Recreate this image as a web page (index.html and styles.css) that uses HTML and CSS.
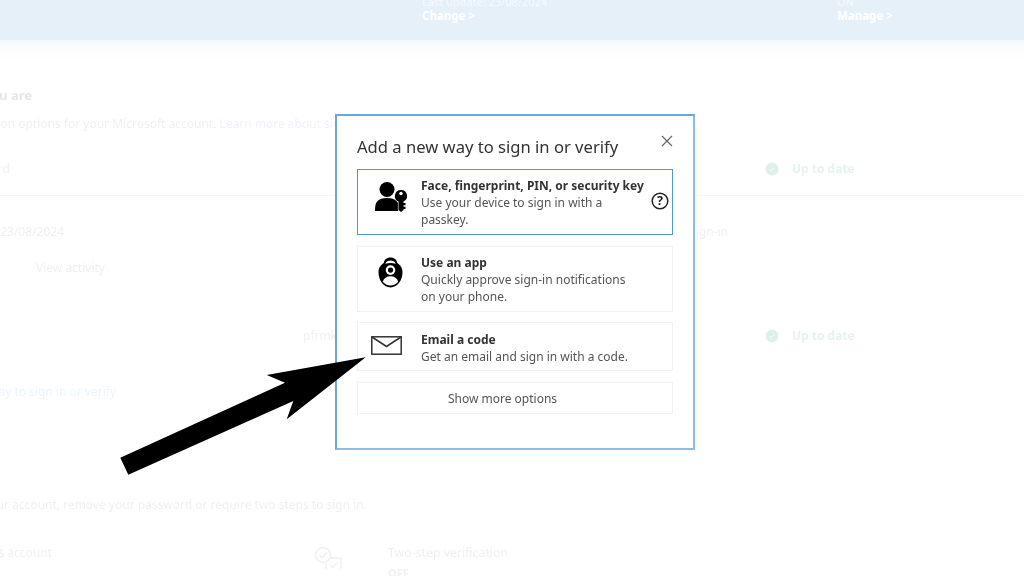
FILE: index.html
```html
<!DOCTYPE html>
<html lang="en">
<head>
    <meta charset="UTF-8">
    <meta name="viewport" content="width=device-width, initial-scale=1.0">
    <title>Add a new way to sign in or verify</title>
    <link rel="stylesheet" href="styles.css">
</head>
<body>
    <div class="backdrop">
        <header class="banner">
            <div class="banner-item banner-password">
                <div>Last update: 23/08/2024</div>
                <div class="banner-link">Change &gt;</div>
            </div>
            <div class="banner-item banner-verify">
                <div>ON</div>
                <div class="banner-link">Manage &gt;</div>
            </div>
        </header>
        <div class="banner-fade"></div>

        <main class="content">
            <h2 class="section-title">Ways to prove who you are</h2>
            <p class="section-desc">Here are the sign-in verification options for your Microsoft account. <a class="link">Learn more about sign-in</a></p>

            <div class="row row-password">
                <span class="name-password">Password</span>
                <span class="status">
                    <svg class="status-icon" viewBox="0 0 14 14"><circle cx="7" cy="7" r="6.5" fill="#dff0ec"/><path d="M4.5 7.2l1.7 1.6 3.2-3.4" fill="none" stroke="#fff" stroke-width="1"/></svg>
                    Up to date
                </span>
            </div>

            <div class="row row-update">
                <span class="name-update">Last update: 23/08/2024</span>
                <span class="note-signin">Use it for password-free sign-in</span>
            </div>
            <div class="row row-activity"><span class="name-activity">View activity</span></div>

            <div class="row row-email">
                <span class="name-email">pfrmk@outlook.com</span>
                <span class="status">
                    <svg class="status-icon" viewBox="0 0 14 14"><circle cx="7" cy="7" r="6.5" fill="#dff0ec"/><path d="M4.5 7.2l1.7 1.6 3.2-3.4" fill="none" stroke="#fff" stroke-width="1"/></svg>
                    Up to date
                </span>
            </div>

            <div class="row row-add"><a class="link name-add">Add a new way to sign in or verify</a></div>

            <p class="row row-extra"><span class="name-extra">Increase the security of your account, remove your password or require two steps to sign in.</span></p>

            <div class="row row-two-step">
                <span class="name-account">Secure this account</span>
                <svg class="two-step-icon" viewBox="0 0 28 22" fill="none" stroke="#eeeeee" stroke-width="1.3">
                    <circle cx="9" cy="8" r="7.5"/>
                    <path d="M5.5 8l2.6 2.6 5-5"/>
                    <path d="M16 11h11v11M12 22v-6"/>
                    <path d="M16 18l2.5 2.5 5-5"/>
                </svg>
                <div class="two-step-text">
                    <div>Two-step verification</div>
                    <div class="two-step-state">OFF</div>
                </div>
            </div>
        </main>
    </div>

    <div class="modal">
        <div class="modal-head">
            <h1 class="modal-title">Add a new way to sign in or verify</h1>
            <svg class="modal-close" viewBox="0 0 12 12" fill="none" stroke="#666" stroke-width="1.200"><path d="M1 1l10 10M11 1L1 11"/></svg>
        </div>

        <div class="option option-active">
            <svg class="option-icon option-icon-key" viewBox="0 0 32 31">
                <circle cx="12" cy="8.500" r="7.500" fill="#000"/>
                <path d="M0 30c0-5 .5-8 2.500-10 2-2 5-3 9.500-3s7.500 1 9.500 3c1 1 1.800 2.300 2.200 4V30z" fill="#000"/>
                <path d="M26 9a6 6 0 0 1 2.500 11.500V22h2v2.300h-2v1.400h2V28h-2v1L26 31l-2.500-2v-8.500A6 6 0 0 1 26 9z" fill="#000" stroke="#fff" stroke-width="1.200" paint-order="stroke"/>
                <circle cx="26" cy="12.500" r="1.700" fill="#fff"/>
            </svg>
            <div class="option-text">
                <div class="option-name">Face, fingerprint, PIN, or security key</div>
                <div>Use your device to sign in with a<br>passkey.</div>
            </div>
            <svg class="option-help" viewBox="0 0 18 18">
                <circle cx="9" cy="9" r="7.800" fill="none" stroke="#222" stroke-width="1.500"/>
                <text x="9" y="13" text-anchor="middle" class="help-mark">?</text>
            </svg>
        </div>

        <div class="option option-app">
            <svg class="option-icon option-icon-app" viewBox="0 0 26 32">
                <path d="M13 0.500c4 0 6.500 2.500 7 5.500 3 2 5.500 5 5.500 9.500 0 9-5.500 16-12.500 16S0.500 24.500 0.500 15.500c0-4.500 2.500-7.500 5.500-9.500 .5-3 3-5.500 7-5.500z" fill="#000"/>
                <path d="M7.500 7c1-2.500 3-3.500 5.500-3.500s4.500 1 5.500 3.500c-1.700-.7-3.500-1-5.500-1s-3.800 .3-5.500 1z" fill="#fff"/>
                <circle cx="13" cy="13.500" r="5" fill="#fff"/>
                <circle cx="13" cy="13.500" r="2.700" fill="#000"/>
                <path d="M5 25.500c1-3.500 4-5.500 8-5.500s7 2 8 5.500c-2 2.500-4.800 4-8 4s-6-1.500-8-4z" fill="#fff"/>
            </svg>
            <div class="option-text">
                <div class="option-name">Use an app</div>
                <div>Quickly approve sign-in notifications<br>on your phone.</div>
            </div>
        </div>

        <div class="option option-short">
            <svg class="option-icon option-icon-mail" viewBox="0 0 31 19" fill="none" stroke="#333" stroke-width="1.500">
                <rect x="0.800" y="0.800" width="29.400" height="17.400"/>
                <path d="M1 1l14.500 9.500L30 1"/>
            </svg>
            <div class="option-text">
                <div class="option-name">Email a code</div>
                <div>Get an email and sign in with a code.</div>
            </div>
        </div>

        <div class="show-more">Show more options</div>
    </div>

    <svg class="pointer-arrow" viewBox="0 0 246 118"><polygon points="0.300,100.700 8.300,117.700 173.300,44 166.700,62.300 245.700,0.300 146.700,18 165,25.700" fill="#000"/></svg>
</body>
</html>
```

FILE: styles.css
```css
body {
    margin: 0;
    width: 1024px;
    height: 576px;
    overflow: hidden;
    background-color: #fff;
    font-family: "Noto Sans", "Open Sans", sans-serif;
    font-size: 12px;
}

/* faded page behind the dialog */
.backdrop {
    height: 576px;
    overflow: hidden;
    color: #f1f0f0;
    filter: blur(0.4px);
}
.banner {
    height: 40px;
    background-color: #e5f0f9;
    color: #f6fafd;
    display: flex;
    font-size: 11px;
    line-height: 14px;
    padding-left: 422px;
    overflow: hidden;
}
.banner-item {
    margin-top: -5px;
}
.banner-password {
    width: 415px;
}
.banner-link {
    font-weight: bold;
    font-size: 11.500px;
    color: #fff;
}
.banner-fade {
    height: 20px;
    background: linear-gradient(#f5f9fd, #fff);
}

.content {
    margin-left: -200px;
    width: 1224px;
    line-height: 20px;
}
.section-title {
    margin: 25px 0 0;
    padding-left: 232px;
    width: 0;
    white-space: nowrap;
    direction: rtl;
    font-size: 13px;
    line-height: 20px;
    color: #e8e7e7;
}
.section-desc {
    margin: 9px 0 0;
    padding-left: 38px;
    white-space: nowrap;
}
.link {
    color: #edf4fb;
}
.row {
    display: flex;
    align-items: center;
    margin: 0;
    white-space: nowrap;
}
.row > span:first-child,
.name-add {
    text-align: right;
}
.row-password {
    margin-top: 25px;
    padding-bottom: 16px;
    border-bottom: 1px solid #f5f5f5;
}
.name-password {
    width: 210px;
    margin-right: 755px;
}
.status {
    display: flex;
    align-items: center;
    gap: 13px;
    font-weight: bold;
    color: #e6f3f0;
}
.status-icon {
    width: 14px;
    height: 14px;
}
.row-update {
    margin-top: 26px;
}
.name-update {
    width: 264px;
}
.note-signin {
    width: 664px;
    text-align: right;
}
.row-activity {
    margin-top: 16px;
    padding-left: 236px;
}
.row-email {
    margin-top: 48px;
    padding-left: 503px;
}
.name-email {
    width: 462px;
    text-align: left !important;
}
.row-add {
    margin-top: 36px;
}
.name-add {
    width: 316px;
}
.row-extra {
    margin-top: 93px;
}
.name-extra {
    width: 567px;
}
.row-two-step {
    margin-top: 28px;
    align-items: flex-start;
}
.name-account {
    width: 252px;
}
.two-step-icon {
    width: 28px;
    height: 22px;
    margin: 4px 46px 0 262px;
}
.two-step-text {
    font-size: 12.300px;
}
.two-step-state {
    font-weight: bold;
    font-size: 11px;
}

/* dialog */
.modal {
    position: absolute;
    left: 335px;
    top: 114px;
    width: 360px;
    height: 336px;
    box-sizing: border-box;
    padding: 0 20px;
    background-color: #fff;
    border: 2px solid #a9cdea;
    border-color: #6ba6d9 #8dbbe3 #8dbbe3 #6ba6d9;
    color: #555;
    display: flex;
    flex-direction: column;
    filter: blur(0.25px);
}
.modal-head {
    display: flex;
    justify-content: space-between;
    height: 53px;
}
.modal-title {
    margin: 19px 0 0;
    font-size: 16.600px;
    font-weight: normal;
    line-height: 24px;
    color: #333;
    white-space: nowrap;
}
.modal-close {
    width: 12px;
    height: 12px;
    margin: 19px 0 0 0;
}
.option {
    display: flex;
    align-items: center;
    box-sizing: border-box;
    width: 316px;
    height: 66px;
    margin-bottom: 11px;
    border: 1px solid #f1f1f1;
    line-height: 17px;
}
.option-active {
    border-color: #4f97d0;
}
.option-app {
    margin-bottom: 10px;
}
.option-short {
    height: 49px;
    align-items: flex-start;
}
.option-icon {
    flex-shrink: 0;
    align-self: flex-start;
}
.option-icon-key {
    width: 32px;
    height: 31px;
    margin: 11px 0 0 17px;
}
.option-icon-app {
    width: 25px;
    height: 31px;
    margin: 10px 5px 0 20px;
}
.option-icon-mail {
    width: 31px;
    height: 19px;
    margin: 13px 6px 0 13px;
}
.option-text {
    margin-left: 14px;
    flex: 1;
}
.option-app .option-text,
.option-short .option-text {
    margin-left: 13px;
}
.option-short .option-text {
    margin-top: 8px;
}
.option-name {
    font-weight: bold;
    color: #333;
}
.option-help {
    width: 18px;
    height: 18px;
    margin: -2px 3px 0 0;
}
.help-mark {
    font-size: 12.500px;
    font-weight: bold;
    fill: #222;
}
.show-more {
    box-sizing: border-box;
    width: 316px;
    height: 32px;
    padding-right: 25px;
    border: 1px solid #f1f1f1;
    text-align: center;
    line-height: 31px;
}

/* annotation drawn on top of the screenshot */
.pointer-arrow {
    position: absolute;
    left: 120px;
    top: 357px;
    width: 246px;
    height: 118px;
}
```
